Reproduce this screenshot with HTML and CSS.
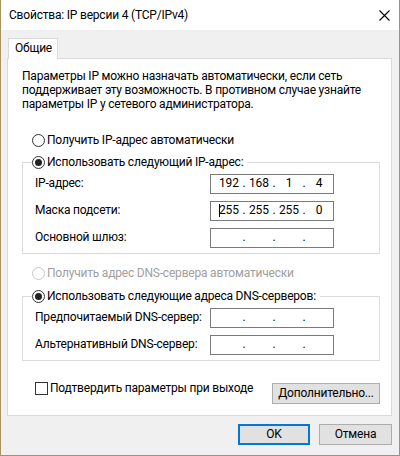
FILE: index.html
```html
<!DOCTYPE html>
<html lang="ru">
<head>
<meta charset="utf-8">
<title>Свойства: IP версии 4 (TCP/IPv4)</title>
<link rel="stylesheet" href="styles.css">
</head>
<body>
<div class="window">
  <div class="titlebar">
    <span class="title">Свойства: IP версии 4 (TCP/IPv4)</span>
    <svg class="close" width="11" height="11" viewBox="0 0 11 11"><path d="M0.5 0.5 L10.5 10.5 M10.5 0.5 L0.5 10.5" stroke="#000" stroke-width="1.1" fill="none"/></svg>
  </div>
  <div class="client">
    <div class="tabs"><div class="tab">Общие</div></div>
    <div class="panel">
      <div class="intro">
        <div class="intro-line">Параметры IP можно назначать автоматически, если сеть</div>
        <div class="intro-line">поддерживает эту возможность. В противном случае узнайте</div>
        <div class="intro-line">параметры IP у сетевого администратора.</div>
      </div>
      <div class="option option-ip"><span class="radio"></span><span>Получить IP-адрес автоматически</span></div>
      <fieldset class="group group-ip">
        <legend class="option"><span class="radio checked"></span><span>Использовать следующий IP-адрес:</span></legend>
        <div class="row"><span class="label">IP-адрес:</span>
          <div class="ipbox"><span class="oct">192</span><span class="dot">.</span><span class="oct">168</span><span class="dot">.</span><span class="oct">1</span><span class="dot">.</span><span class="oct">4</span></div>
        </div>
        <div class="row"><span class="label">Маска подсети:</span>
          <div class="ipbox"><span class="oct"><span class="caret"></span>255</span><span class="dot">.</span><span class="oct">255</span><span class="dot">.</span><span class="oct">255</span><span class="dot">.</span><span class="oct">0</span></div>
        </div>
        <div class="row"><span class="label">Основной шлюз:</span>
          <div class="ipbox"><span class="oct"></span><span class="dot">.</span><span class="oct"></span><span class="dot">.</span><span class="oct"></span><span class="dot">.</span><span class="oct"></span></div>
        </div>
      </fieldset>
      <div class="option disabled option-dns"><span class="radio"></span><span>Получить адрес DNS-сервера автоматически</span></div>
      <fieldset class="group group-dns">
        <legend class="option"><span class="radio checked"></span><span>Использовать следующие адреса DNS-серверов:</span></legend>
        <div class="row"><span class="label">Предпочитаемый DNS-сервер:</span>
          <div class="ipbox"><span class="oct"></span><span class="dot">.</span><span class="oct"></span><span class="dot">.</span><span class="oct"></span><span class="dot">.</span><span class="oct"></span></div>
        </div>
        <div class="row"><span class="label">Альтернативный DNS-сервер:</span>
          <div class="ipbox"><span class="oct"></span><span class="dot">.</span><span class="oct"></span><span class="dot">.</span><span class="oct"></span><span class="dot">.</span><span class="oct"></span></div>
        </div>
      </fieldset>
      <div class="bottom-row">
        <div class="check-option"><span class="checkbox"></span><span>Подтвердить параметры при выходе</span></div>
        <button class="btn btn-adv">Дополнительно...</button>
      </div>
    </div>
    <div class="actions">
      <button class="btn btn-ok">OK</button>
      <button class="btn btn-cancel">Отмена</button>
    </div>
  </div>
</div>
</body>
</html>
```
FILE: styles.css
```css
* { box-sizing: border-box; }
html, body { margin: 0; padding: 0; }
body {
  width: 400px;
  height: 456px;
  font-family: Roboto, "Noto Sans", sans-serif;
  font-size: 12px;
  letter-spacing: -0.2px;
  color: #000;
  background: #f0f0f0;
}
.window {
  width: 400px;
  height: 456px;
  border-left: 1px solid #a8925f;
  border-right: 1px solid #a8925f;
  border-bottom: 1px solid #a8925f;
  background: #f0f0f0;
  display: flex;
  flex-direction: column;
}
.titlebar {
  height: 30px;
  background: #fff;
  display: flex;
  align-items: center;
  justify-content: space-between;
  padding: 0 9px 0 8px;
  flex: none;
}
.title { font-size: 12px; line-height: 16px; }
.close { display: block; }
.client {
  flex: 1;
  padding: 8px 7px 0 6px;
  display: flex;
  flex-direction: column;
}
.tabs { display: flex; height: 20px; padding-left: 1px; }
.tab {
  width: 50px;
  height: 21px;
  background: #fff;
  border: 1px solid #d9d9d9;
  border-bottom: none;
  padding: 2px 0 0 6px;
  line-height: 15px;
  position: relative;
  z-index: 1;
}
.panel {
  height: 358px;
  background: #fff;
  border: 1px solid #d9d9d9;
  padding: 10px 11px 0 14px;
  display: flex;
  flex-direction: column;
}
.intro { white-space: nowrap; }
.intro-line { line-height: 14.2px; }
.option {
  display: flex;
  align-items: center;
  line-height: 15px;
  height: 15px;
}
.option-ip { margin: 21px 0 0 10px; }
.option-dns { margin: 12px 0 0 10px; }
.radio {
  width: 13px;
  height: 13px;
  border: 1px solid #333;
  border-radius: 50%;
  margin-right: 2px;
  display: flex;
  align-items: center;
  justify-content: center;
  flex: none;
}
.radio.checked::after {
  content: "";
  width: 7px;
  height: 7px;
  border-radius: 50%;
  background: #222;
}
.disabled { color: #a0a0a0; }
.disabled .radio { border-color: #c8c8c8; }
.group {
  margin: 7px 0 0 0;
  border: 1px solid #dcdcdc;
  padding: 0 45px 5px 12px;
  min-width: 0;
}
.group-dns { margin-top: 8px; }
.group legend {
  padding: 0 4px 0 0;
  margin-left: -3px;
}
.row {
  display: flex;
  align-items: center;
  height: 20px;
  margin-top: 7px;
}
.group .row:first-of-type { margin-top: 4px; }
.label { line-height: 15px; }
.ipbox {
  margin-left: auto;
  width: 124px;
  height: 20px;
  border: 1px solid #7a7a7a;
  background: #fff;
  display: flex;
  align-items: center;
  padding-left: 5px;
  line-height: 15px;
  letter-spacing: 0;
}
.oct { width: 26px; text-align: center; position: relative; }
.dot { width: 4px; text-align: center; }
.caret {
  position: absolute;
  left: 3px;
  top: 1px;
  width: 1px;
  height: 13px;
  background: #000;
}
.bottom-row {
  display: flex;
  justify-content: space-between;
  align-items: flex-start;
  margin-top: 20px;
}
.check-option {
  display: flex;
  align-items: center;
  margin-left: 13px;
  line-height: 15px;
}
.checkbox {
  width: 13px;
  height: 13px;
  border: 1px solid #333;
  margin-right: 2px;
  flex: none;
}
.btn {
  font-family: Roboto, "Noto Sans", sans-serif;
  font-size: 12px;
  letter-spacing: -0.2px;
  color: #000;
  background: #e1e1e1;
  border: 1px solid #adadad;
  height: 21px;
  padding: 0;
  line-height: 15px;
}
.btn-adv { width: 108px; margin-top: 2px; }
.actions {
  display: flex;
  justify-content: flex-end;
  gap: 9px;
  padding-top: 8px;
}
.btn-ok { width: 72px; border: 2px solid #0078d7; }
.btn-cancel { width: 73px; }
```
